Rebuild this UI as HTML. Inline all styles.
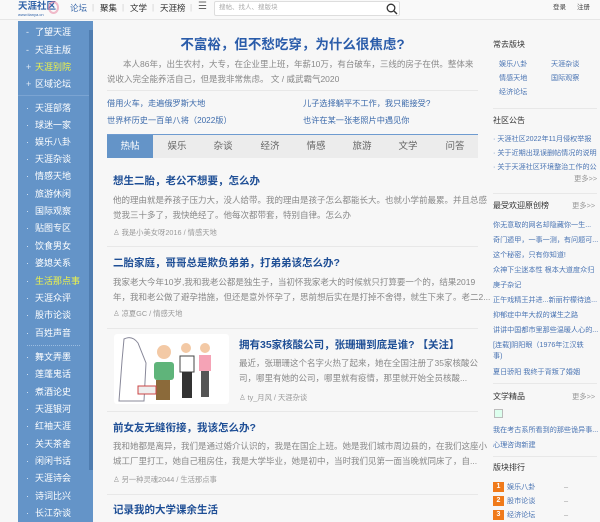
<!DOCTYPE html>
<html><head><meta charset="utf-8"><style>
*{margin:0;padding:0;box-sizing:border-box}
body{width:600px;height:522px;overflow:hidden;background:#f7f7f7;font-family:"Liberation Sans","Noto Sans CJK SC",sans-serif;font-size:8px;color:#666;position:relative}
.a{position:absolute;white-space:nowrap;line-height:12px}
#hd{position:absolute;left:0;top:0;width:600px;height:20px;background:#f9f9f9;border-bottom:1px solid #e6e6e6}
#sb{position:absolute;left:18px;top:21px;width:75px;height:501px;background:#6494c8}
#sbar{position:absolute;left:89px;top:30px;width:4px;height:440px;background:#4f7db0}
.si{position:absolute;left:35px;color:#fff;font-size:9px;line-height:12px}
.si:before{content:"·";position:absolute;left:-9px;color:#dfe9f5}
.pm:before{content:"+"!important}
.mn:before{content:"-"!important}
.y{color:#eef34a}
.t{color:#1f4f96;font-weight:bold;font-size:10.5px}
.d{color:#888;font-size:8.5px}
.m{color:#999;font-size:7.3px}
.ln{position:absolute;height:1px;background:#e8e8e8}
.bl{color:#3d6bab}
.rt{color:#333;font-size:8px}
.rl{color:#4a74b3;font-size:7.1px}
.tab{position:absolute;top:135px;height:23px;line-height:23px;font-size:9.5px;color:#666;text-align:center;width:46px}
.n{position:absolute;left:493px;width:11px;height:10px;background:#f07a1a;color:#fff;font-size:7px;text-align:center;line-height:10px;font-weight:bold}
</style></head><body>
<div id="hd"></div>
<div class="a" style="left:18px;top:1px;color:#2f62a8;font-weight:bold;font-size:9.5px">天涯社区</div>
<div class="a" style="left:18px;top:12px;font-size:4px;color:#2f62a8;line-height:5px">www.tianya.cn</div>
<div style="position:absolute;left:48px;top:1px;width:11px;height:13px;border-radius:50%;border:2px solid #e87a9a;opacity:.5"></div>
<div class="a" style="left:70px;top:2px;color:#3d6bab;font-size:8.5px">论坛</div>
<div class="a" style="left:92px;top:2px;color:#ccc">|</div>
<div class="a" style="left:100px;top:2px;color:#333;font-size:8.5px">聚集</div>
<div class="a" style="left:122px;top:2px;color:#ccc">|</div>
<div class="a" style="left:130px;top:2px;color:#333;font-size:8.5px">文学</div>
<div class="a" style="left:152px;top:2px;color:#ccc">|</div>
<div class="a" style="left:160px;top:2px;color:#333;font-size:8.5px">天涯榜</div>
<div class="a" style="left:190px;top:2px;color:#ccc">|</div>
<div class="a" style="left:198px;top:1px;color:#666;font-size:10px">☰</div>
<div style="position:absolute;left:214px;top:1px;width:186px;height:15px;background:#fff;border:1px solid #ddd;border-radius:2px"></div>
<div class="a" style="left:219px;top:2px;color:#aaa;font-size:6.5px">搜帖、找人、搜版块</div>
<svg style="position:absolute;left:386px;top:3px" width="12" height="12" viewBox="0 0 12 12"><circle cx="5" cy="5" r="3.8" fill="none" stroke="#333" stroke-width="1.3"/><line x1="8" y1="8" x2="11" y2="11" stroke="#333" stroke-width="1.4"/></svg>
<div class="a" style="left:553px;top:2px;color:#444;font-size:6.5px">登录</div>
<div class="a" style="left:577px;top:2px;color:#444;font-size:6.5px">注册</div>

<div id="sb"></div><div id="sbar"></div>
<div class="si mn" style="top:26px">了望天涯</div>
<div class="si mn" style="top:44px">天涯主版</div>
<div class="si pm y" style="top:61px">天涯别院</div>
<div class="si pm" style="top:78px">区域论坛</div>
<div style="position:absolute;left:18px;top:95px;width:71px;height:1px;background:#7ba4d2"></div>
<div class="si" style="top:102px">天涯部落</div>
<div class="si" style="top:119px">球迷一家</div>
<div class="si" style="top:136px">娱乐八卦</div>
<div class="si" style="top:153px">天涯杂谈</div>
<div class="si" style="top:170px">情感天地</div>
<div class="si" style="top:188px">旅游休闲</div>
<div class="si" style="top:205px">国际观察</div>
<div class="si" style="top:222px">贴图专区</div>
<div class="si" style="top:240px">饮食男女</div>
<div class="si" style="top:257px">婆媳关系</div>
<div class="si y" style="top:275px">生活那点事</div>
<div class="si" style="top:292px">天涯众评</div>
<div class="si" style="top:309px">股市论谈</div>
<div class="si" style="top:327px">百姓声音</div>
<div style="position:absolute;left:27px;top:345px;width:53px;height:1px;border-top:1px dotted #9cbde0"></div>
<div class="si" style="top:351px">舞文弄墨</div>
<div class="si" style="top:368px">莲蓬鬼话</div>
<div class="si" style="top:386px">煮酒论史</div>
<div class="si" style="top:403px">天涯银河</div>
<div class="si" style="top:420px">红袖天涯</div>
<div class="si" style="top:438px">关天茶舍</div>
<div class="si" style="top:455px">闲闲书话</div>
<div class="si" style="top:472px">天涯诗会</div>
<div class="si" style="top:490px">诗词比兴</div>
<div class="si" style="top:507px">长江杂谈</div>

<div class="a" style="left:107px;top:36px;width:371px;text-align:center;color:#2a5caa;font-weight:bold;font-size:13.5px;line-height:18px">不富裕，但不愁吃穿，为什么很焦虑?</div>
<div class="a d" style="left:107px;top:57px;line-height:15px;white-space:normal;width:372px;text-indent:16px">本人86年，出生农村，大专，在企业里上班，年薪10万，有台破车，三线的房子在供。整体来说收入完全能养活自己，但是我非常焦虑。 文 / 威武霸气2020</div>
<div class="ln" style="left:107px;top:90px;width:371px"></div>
<div class="a bl" style="left:107px;top:98px;font-size:8.2px">借用火车，走遍俄罗斯大地</div>
<div class="a bl" style="left:303px;top:98px;font-size:8.2px">儿子选择躺平不工作，我只能接受?</div>
<div class="a bl" style="left:107px;top:115px;font-size:8.2px">世界杯历史一百单八将（2022版）</div>
<div class="a bl" style="left:303px;top:115px;font-size:8.2px">也许在某一张老照片中遇见你</div>

<div style="position:absolute;left:107px;top:134px;width:371px;height:24px;background:#ececec;border-top:1px solid #6e9bd0"></div>
<div class="tab" style="left:107px;background:#6494c8;color:#fff">热帖</div>
<div class="tab" style="left:154px">娱乐</div>
<div class="tab" style="left:200px">杂谈</div>
<div class="tab" style="left:247px">经济</div>
<div class="tab" style="left:293px">情感</div>
<div class="tab" style="left:339px">旅游</div>
<div class="tab" style="left:385px">文学</div>
<div class="tab" style="left:432px">问答</div>

<div class="a t" style="left:113px;top:175px">想生二胎，老公不想要，怎么办</div>
<div class="a d" style="left:113px;top:194px">他的理由就是养孩子压力大，没人给带。我的理由是孩子怎么都能长大。也就小学前最累。并且总感</div>
<div class="a d" style="left:113px;top:209px">觉我三十多了，我快绝经了。他每次都带套，特别自律。怎么办</div>
<div class="a m" style="left:113px;top:227px">♙ 我是小美女呀2016 / 情感天地</div>
<div class="ln" style="left:107px;top:246px;width:371px"></div>
<div class="a t" style="left:113px;top:257px">二胎家庭，哥哥总是欺负弟弟，打弟弟该怎么办?</div>
<div class="a d" style="left:113px;top:276px">我家老大今年10岁,我和我老公都是独生子，当初怀我家老大的时候就只打算要一个的，结果2019</div>
<div class="a d" style="left:113px;top:291px">年，我和老公做了避孕措施，但还是意外怀孕了，思前想后实在是打掉不舍得，就生下来了。老二2...</div>
<div class="a m" style="left:113px;top:308px">♙ 凉夏GC / 情感天地</div>
<div class="ln" style="left:107px;top:328px;width:371px"></div>
<svg style="position:absolute;left:114px;top:334px;border-radius:3px" width="115" height="70" viewBox="0 0 115 70"><rect width="115" height="70" fill="#fff"/><path d="M10 5 q8 -4 14 4 l8 20 l-2 38 h-25 l3-40z" fill="none" stroke="#889" stroke-width="1"/><rect x="40" y="28" width="20" height="18" fill="#5fb47a" rx="3"/><rect x="42" y="46" width="14" height="20" fill="#8b6a3a"/><circle cx="50" cy="18" r="7" fill="#f3c9a5"/><circle cx="72" cy="14" r="5" fill="#f3c9a5"/><rect x="66" y="22" width="14" height="16" fill="#fff" stroke="#444"/><rect x="68" y="38" width="10" height="26" fill="#333"/><circle cx="91" cy="14" r="5" fill="#f3c9a5"/><rect x="85" y="21" width="12" height="16" fill="#f5a3b6"/><rect x="87" y="37" width="8" height="26" fill="#555"/><rect x="24" y="52" width="18" height="8" fill="#eee" stroke="#c44"/></svg>
<div class="a t" style="left:239px;top:339px">拥有35家核酸公司，张珊珊到底是谁? 【关注】</div>
<div class="a d" style="left:239px;top:357px">最近，张珊珊这个名字火热了起来，她在全国注册了35家核酸公</div>
<div class="a d" style="left:239px;top:372px">司，哪里有她的公司，哪里就有疫情，那里就开始全员核酸...</div>
<div class="a m" style="left:239px;top:392px">♙ ty_月风 / 天涯杂谈</div>
<div class="ln" style="left:107px;top:411px;width:371px"></div>
<div class="a t" style="left:113px;top:422px">前女友无缝衔接，我该怎么办?</div>
<div class="a d" style="left:113px;top:440px">我和她都是离异，我们是通过婚介认识的，我是在国企上班。她是我们城市周边县的，在我们这座小</div>
<div class="a d" style="left:113px;top:455px">城工厂里打工，她自己租房住，我是大学毕业，她是初中，当时我们见第一面当晚就同床了，自...</div>
<div class="a m" style="left:113px;top:474px">♙ 另一种灵魂2044 / 生活那点事</div>
<div class="ln" style="left:107px;top:494px;width:371px"></div>
<div class="a t" style="left:113px;top:504px">记录我的大学课余生活</div>

<div class="a rt" style="left:493px;top:39px">常去版块</div>
<div class="a rl" style="left:499px;top:58px">娱乐八卦</div><div class="a rl" style="left:551px;top:58px">天涯杂谈</div>
<div class="a rl" style="left:499px;top:72px">情感天地</div><div class="a rl" style="left:551px;top:72px">国际观察</div>
<div class="a rl" style="left:499px;top:86px">经济论坛</div>
<div class="ln" style="left:493px;top:108px;width:104px"></div>
<div class="a rt" style="left:493px;top:115px">社区公告</div>
<div class="a rl" style="left:493px;top:133px">· 天涯社区2022年11月侵权举报</div>
<div class="a rl" style="left:493px;top:147px">· 关于近期出现误删帖情况的说明</div>
<div class="a rl" style="left:493px;top:161px">· 关于天涯社区环境整治工作的公</div>
<div class="a m" style="left:574px;top:173px">更多>></div>
<div class="ln" style="left:493px;top:193px;width:104px"></div>
<div class="a rt" style="left:493px;top:200px">最受欢迎原创榜</div>
<div class="a m" style="left:572px;top:200px">更多>></div>
<div class="a rl" style="left:493px;top:219px">你无意取的网名却隐藏你一生...</div>
<div class="a rl" style="left:493px;top:234px">奇门遁甲，一事一测，有问题可...</div>
<div class="a rl" style="left:493px;top:249px">这个秘密，只有你知道!</div>
<div class="a rl" style="left:493px;top:264px">众神下尘迷本性 根本大道度众归</div>
<div class="a rl" style="left:493px;top:279px">庚子杂记</div>
<div class="a rl" style="left:493px;top:294px">正午戏精王并进...新丽柠檬待追...</div>
<div class="a rl" style="left:493px;top:309px">抑郁症中年大叔的谋生之路</div>
<div class="a rl" style="left:493px;top:324px">讲讲中国都市里那些温暖人心的...</div>
<div class="a rl" style="left:493px;top:339px">[连载]阴阳眼（1976年江汉轶</div>
<div class="a rl" style="left:493px;top:350px">事)</div>
<div class="a rl" style="left:493px;top:366px">夏日骄阳 我终于背叛了婚姻</div>
<div class="ln" style="left:493px;top:383px;width:104px"></div>
<div class="a rt" style="left:493px;top:391px">文学精品</div>
<div class="a m" style="left:572px;top:391px">更多>></div>
<div style="position:absolute;left:494px;top:409px;width:9px;height:9px;border:1px solid #bbb;background:#dfe"></div>
<div class="a rl" style="left:493px;top:424px">我在考古系所看到的那些诡异事...</div>
<div class="a rl" style="left:493px;top:439px">心理咨询新建</div>
<div class="ln" style="left:493px;top:456px;width:104px"></div>
<div class="a rt" style="left:493px;top:462px">版块排行</div>
<div class="n" style="top:482px">1</div><div class="a rl" style="left:507px;top:481px">娱乐八卦</div><div class="a m" style="left:564px;top:481px">–</div>
<div class="n" style="top:496px">2</div><div class="a rl" style="left:507px;top:495px">股市论谈</div><div class="a m" style="left:564px;top:495px">–</div>
<div class="n" style="top:510px">3</div><div class="a rl" style="left:507px;top:509px">经济论坛</div><div class="a m" style="left:564px;top:509px">–</div>
</body></html>
